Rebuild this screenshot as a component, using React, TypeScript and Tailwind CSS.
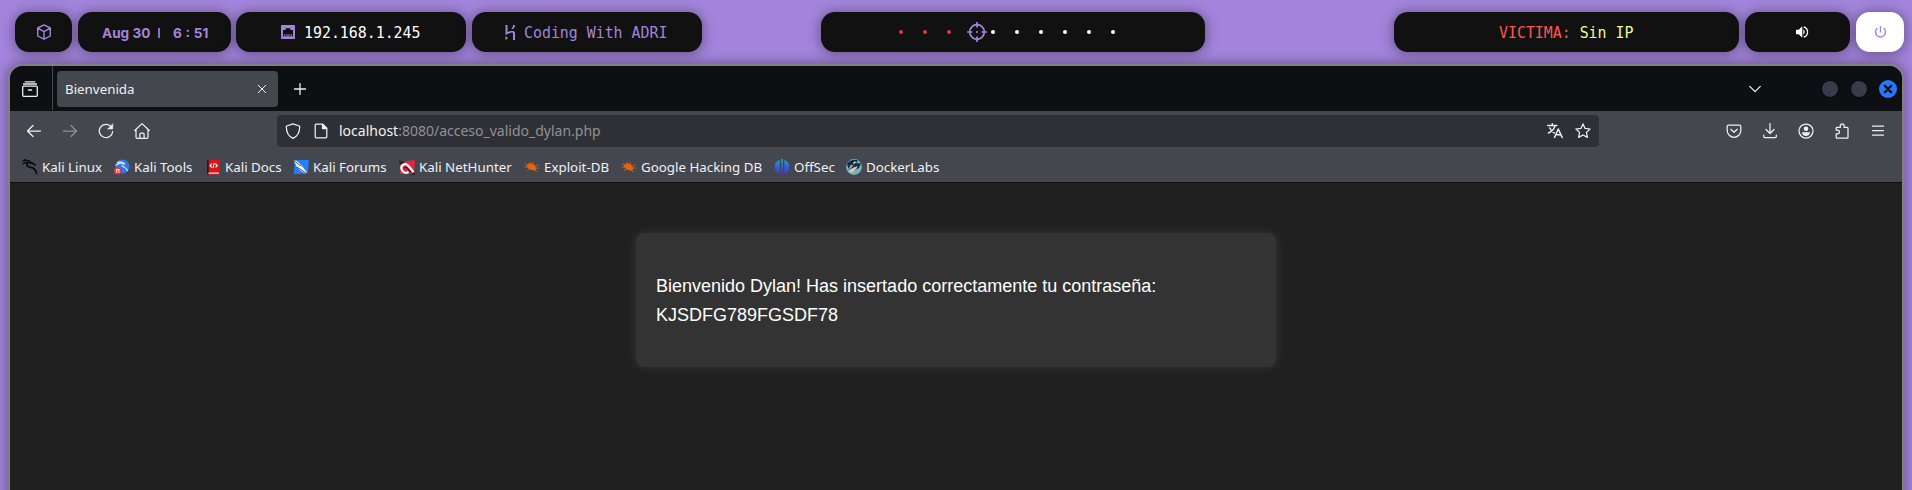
import type { ReactNode } from "react";

const PURPLE = "#a384dc";

function Icon({ children, size = 16, className = "" }: { children: ReactNode; size?: number; className?: string }) {
  return (
    <svg
      width={size}
      height={size}
      viewBox="0 0 16 16"
      fill="none"
      stroke="currentColor"
      strokeWidth="1.25"
      strokeLinecap="round"
      strokeLinejoin="round"
      className={`block shrink-0 ${className}`}
    >
      {children}
    </svg>
  );
}

function Pill({ children, className = "" }: { children?: ReactNode; className?: string }) {
  return (
    <div
      className={`flex h-10 shrink-0 items-center rounded-[14px] shadow-[0_1px_12px_2px_rgba(0,0,0,0.32)] ${className}`}
    >
      {children}
    </div>
  );
}

function Mono({ children, className = "" }: { children: ReactNode; className?: string }) {
  return (
    <span
      className={`mt-0.5 inline-block origin-left scale-x-[0.93] whitespace-pre font-['DejaVu_Sans_Mono','Liberation_Mono',monospace] text-[16px] leading-5 ${className}`}
    >
      {children}
    </span>
  );
}

function Dot({ className }: { className: string }) {
  return <span className={`mr-5 size-1 shrink-0 rounded-full ${className}`} />;
}

function StatusBar() {
  return (
    <header className="flex h-16 items-start pl-[15px] pt-3">
      <Pill className="w-[57px] justify-center bg-[#111111]">
        <svg width="16" height="16" viewBox="0 0 16 16" fill="none" stroke={PURPLE} strokeWidth="1.4" strokeLinejoin="round">
          <path d="M8 .9 14.3 4v8L8 15.2 1.7 12V4L8 .9ZM1.7 4.1 8 7.6l6.3-3.5M8 7.6v7.500" />
        </svg>
      </Pill>
      <Pill className="ml-1.5 w-[153px] whitespace-pre bg-[#111111] pl-6 pt-0.5 font-['Inter',sans-serif] text-[13.6px] font-bold leading-5 text-[#a384dc]">
        <span className="w-[56px] shrink-0">Aug 30</span>
        <span className="mr-[13px] h-2.5 w-0.5 shrink-0 bg-[#8a6fba]" />
        <span className="[word-spacing:0.5px]">6 : 51</span>
      </Pill>
      <Pill className="ml-[5px] w-[230px] bg-[#111111] pl-[45px]">
        <svg width="14" height="14" viewBox="0 0 14 14" className="mr-[9px] shrink-0">
          <rect width="14" height="14" rx="1" fill={PURPLE} />
          <path d="M2 11.5V5h2.5V3.2h5V5H12v6.5h-1.3V9H9.8v2.5H8.4V9h-.9v2.5h-1V9h-.9v2.5H4.2V9h-.9v2.5Z" fill="#111" />
        </svg>
        <Mono className="text-white">192.168.1.245</Mono>
      </Pill>
      <Pill className="ml-1.5 w-[230px] bg-[#111111] pl-[33px]">
        <svg width="11" height="17" viewBox="0 0 11 17" className="mr-2 shrink-0" fill={PURPLE}>
          <path d="M.5 1h2v7C4.6 7 10 5.700 10 9v7H8V9.500c0-2.400-5 .4-7.500 1.500ZM.5 12l2.500 2-2.500 2.200ZM8 1h2c0 1.900-.7 3-1.800 4H6.200C7.300 4 8 2.600 8 1Z" />
        </svg>
        <Mono className="text-[#a384dc]">Coding With ADRI</Mono>
      </Pill>
      <Pill className="ml-[119px] w-[384px] bg-[#111111] pl-[78px]">
        <Dot className="bg-[#e53935]" />
        <Dot className="bg-[#e53935]" />
        <span className="mr-4 size-1 shrink-0 rounded-full bg-[#e53935]" />
        <svg width="20" height="20" viewBox="0 0 20 20" fill="none" stroke={PURPLE} strokeWidth="1.7" className="mr-1 shrink-0">
          <circle cx="10" cy="10" r="7.300" />
          <path d="M10 0v5.500M10 14.500V20M0 10h5.500M14.500 10H20M9 10h2" />
        </svg>
        <Dot className="bg-white" />
        <Dot className="bg-white" />
        <Dot className="bg-white" />
        <Dot className="bg-white" />
        <Dot className="bg-white" />
        <Dot className="bg-white" />
      </Pill>
      <Pill className="ml-[189px] w-[345px] bg-[#111111] pl-[105px]">
        <Mono>
          <span className="text-[#ff5555]">VICTIMA:</span>
          <span className="text-[#f1fa8c]"> Sin IP</span>
        </Mono>
      </Pill>
      <Pill className="ml-1.5 w-[105px] bg-[#111111] pl-[50px]">
        <svg width="14" height="14" viewBox="0 0 14 14" fill="#fff" className="shrink-0">
          <path d="M1 4.700h2.700L7.300 1.200v11.600L3.700 9.300H1Z" />
          <path d="M8.300 4.300c1.800.9 1.800 4.500 0 5.400Z" />
          <path d="M8.800 2c5 1.200 5 8.800 0 10" fill="none" stroke="#fff" strokeWidth="1.300" />
        </svg>
      </Pill>
      <Pill className="ml-1.5 w-12 justify-center bg-white">
        <svg width="13" height="14" viewBox="0 0 13 14" fill="none" stroke={PURPLE} strokeWidth="1.400" className="ml-px">
          <path d="M6.500 1v6.500M3.500 3A5 5 0 1 0 9.500 3" />
        </svg>
      </Pill>
    </header>
  );
}

function TabStrip() {
  return (
    <div className="flex h-[45px] shrink-0 items-center bg-[#0d0f13] text-[#f0f0f3]">
      <div className="flex w-[42px] shrink-0 justify-center">
        <Icon size={16} className="-ml-0.5">
          <path d="M3.200.8h9.600M1.500 3h13M1.700 5.200h12.600a1 1 0 0 1 1 1v8.100a1 1 0 0 1-1 1H1.700a1 1 0 0 1-1-1V6.200a1 1 0 0 1 1-1Z" strokeWidth="1.300" />
          <path d="M6.500 9h3" strokeWidth="1.500" />
        </Icon>
      </div>
      <div className="h-[44px] w-px shrink-0 self-start bg-[#44474e]" />
      <div className="ml-1 flex h-9 w-[221px] shrink-0 items-center rounded-[4px] bg-[#44474e] pl-2 pr-[11px]">
        <span className="flex-1 text-[13.33px] leading-5">Bienvenida</span>
        <Icon size={10}>
          <path d="M2 2l12 12M14 2 2 14" strokeWidth="1.600" />
        </Icon>
      </div>
      <Icon size={12} className="ml-4">
        <path d="M8 .7v14.600M.7 8h14.600" strokeWidth="1.700" />
      </Icon>
      <Icon size={12} className="ml-auto">
        <path d="M1 4.500 8 11.500l7-7" strokeWidth="1.700" />
      </Icon>
      <div className="ml-[61px] size-4 shrink-0 rounded-full bg-[#383c4a] shadow-[0_0_0_1px_#08090b]" />
      <div className="ml-[13px] size-4 shrink-0 rounded-full bg-[#383c4a] shadow-[0_0_0_1px_#08090b]" />
      <div className="ml-3 mr-[5px] flex size-[18px] shrink-0 items-center justify-center rounded-full bg-[#2777ff]">
        <Icon size={10}>
          <path d="M3 3l10 10M13 3 3 13" stroke="#0d0f13" strokeWidth="3.800" />
        </Icon>
      </div>
    </div>
  );
}

function Cell({ children }: { children: ReactNode }) {
  return <div className="flex w-9 shrink-0 items-center justify-center">{children}</div>;
}

function NavBar() {
  return (
    <div className="flex h-9 shrink-0 items-start bg-[#44474e] pt-1 text-[#f0f0f3]">
      <div className="flex h-8 flex-1 items-center pl-1.5">
        <Cell>
          <Icon>
            <path d="M7 2.500 1.500 8 7 13.500M1.500 8h13" />
          </Icon>
        </Cell>
        <Cell>
          <Icon className="text-[#8f9195]">
            <path d="M9 2.500 14.500 8 9 13.500M14.500 8h-13" />
          </Icon>
        </Cell>
        <Cell>
          <Icon>
            <path d="M13.200 3.700A6.700 6.700 0 1 0 14.700 8.500" />
            <path d="M14.800 1v5H9.800Z" fill="currentColor" strokeWidth="0.500" />
          </Icon>
        </Cell>
        <Cell>
          <Icon className="-ml-px">
            <path d="M.8 7.500 7.400 1.100q.6-.5 1.200 0l6.600 6.400M2 6.800v7.400q0 1.100 1.100 1.100h9.800q1.100 0 1.100-1.100V6.800M5.900 15.200v-4q0-1 1-1h2.200q1 0 1 1v4" />
          </Icon>
        </Cell>
        <div className="ml-[117px] flex h-8 w-[1322px] shrink-0 items-center rounded-[4px] bg-[#2f3035] pl-2">
          <Icon>
            <path d="M8 .8 14.300 3q.4.200.4.600C14.700 9.500 12.500 13.500 8 15.400 3.500 13.500 1.300 9.500 1.300 3.600q0-.4.400-.6Z" />
          </Icon>
          <Icon className="ml-3">
            <path d="M3.200 1.200h6.600l4 4v8.600q0 1-1 1H3.200q-1 0-1-1V2.200q0-1 1-1Z" />
            <path d="M9.500 1.500v4h4Z" fill="currentColor" />
          </Icon>
          <p className="ml-[10px] flex-1 text-[14px] leading-5 text-[#8f9195]">
            <span className="text-[#f0f0f3]">localhost</span>:8080/acceso_valido_dylan.php
          </p>
          <Icon>
            <path d="M.8 2.500h9M5.300.8v1.700M8 2.700C7.300 6 4.500 8.800 1.500 10M2.800 5C4 7.500 5.500 9 7.300 10M7.500 14.500 11.300 6l3.900 8.500M8.900 11.800h4.800" strokeWidth="1.500" />
          </Icon>
          <Icon className="ml-3 mr-2">
            <path d="m8 .9 2.100 4.500 5 .6-3.700 3.400 1 5L8 12l-4.400 2.400 1-5L.9 6l5-.6Z" />
          </Icon>
        </div>
      </div>
      <div className="mr-1.5 flex h-8 items-center">
        <Cell>
          <Icon>
            <path d="M2.200 2h11.600q1 0 1 1v4.500a6.800 6.800 0 0 1-13.600 0V3q0-1 1-1ZM4.800 6.300 8 9.300l3.200-3" />
          </Icon>
        </Cell>
        <Cell>
          <Icon>
            <path d="M8 .5v9.700M4 6.500 8 10.500l4-4M1.700 12.200v1.400q0 1 1 1h10.600q1 0 1-1v-1.400" />
          </Icon>
        </Cell>
        <Cell>
          <Icon>
            <circle cx="8" cy="8" r="7" />
            <path d="M4 9.300h8c0 2.200-1.700 3.700-4 3.700S4 11.500 4 9.300Z" fill="currentColor" stroke="none" />
            <circle cx="8" cy="5.800" r="2.300" fill="currentColor" stroke="none" />
          </Icon>
        </Cell>
        <Cell>
          <Icon>
            <path d="M2.200 14.200v-3.400h1.300a1.900 1.900 0 0 0 0-3.800H2.200V5.200q0-.8.800-.8h3.300V2.800a1.900 1.900 0 0 1 3.800 0v1.600h3q.9 0 .9.900v8.900q0 .9-.9.900H3.100q-.9 0-.9-.9Z" />
          </Icon>
        </Cell>
        <Cell>
          <Icon>
            <path d="M2.500 3h11M2.500 7.500h11M2.500 12h11" />
          </Icon>
        </Cell>
      </div>
    </div>
  );
}

function Fav({ children }: { children: ReactNode }) {
  return (
    <svg width="16" height="16" viewBox="0 0 16 16" className="block shrink-0">
      {children}
    </svg>
  );
}

function Bug() {
  return (
    <Fav>
      <path d="M2.500 6.500C5 3 9 4 11.500 7.500c1.500 2 1 3.700-1 3.900C7 11.700 3.500 10 2.500 6.500Z" fill="#e8630f" />
      <path d="M1 4.500l3 1.500M.5 8l3 .2M3 12l2.500-2M6 2.500 7 5M9.500 3l.2 2.500M11 7l3.700-1M11.500 9h4M10 11l3 1.800" stroke="#c65a1a" strokeWidth="1" />
    </Fav>
  );
}

function Bookmark({ icon, label, className }: { icon: ReactNode; label: string; className: string }) {
  return (
    <div className={`flex shrink-0 items-center gap-1 whitespace-nowrap ${className}`}>
      {icon}
      <span>{label}</span>
    </div>
  );
}

function Bookmarks() {
  return (
    <div className="flex h-[35px] shrink-0 items-center bg-[#44474e] pl-3 pt-[5px] text-[13.33px] leading-5 text-[#f0f0f3]">
      <Bookmark
        className="w-[92px]"
        label="Kali Linux"
        icon={
          <Fav>
            <path d="M0 2.300C4 .8 8 1.300 9.500 4.300M.5 5.300C3 3.300 6.500 3 9 4.600M2 .3l4 1.500" stroke="#0b0b0c" strokeWidth="1.100" fill="none" />
            <path d="M5.800 3.500c-2 2.300-.6 4.600 2.700 4.800 3.500.2 5.500 2.700 6.300 7M9 3.800c2 .3 3.300 1 4.500 2.700" stroke="#0b0b0c" strokeWidth="1.700" fill="none" />
          </Fav>
        }
      />
      <Bookmark
        className="w-[91px]"
        label="Kali Tools"
        icon={
          <Fav>
            <circle cx="8.500" cy="7.500" r="7" fill="#2878ef" />
            <path d="M1.500 6.500C5 3.500 9 3.500 11 5.500M3 3.700c3-1.500 6-1 8 1.500M8 5.500c-.5 3 4.500 2 5.500 6.500" stroke="#d8e8ff" strokeWidth="1.200" fill="none" />
            <circle cx="3.700" cy="11.800" r="3.700" fill="#e8343b" />
            <path d="M2 10.500h3.600M2.700 10.500v3.300M4.900 10.500v3.300" stroke="#fff" strokeWidth="0.900" />
          </Fav>
        }
      />
      <Bookmark
        className="w-[88px]"
        label="Kali Docs"
        icon={
          <Fav>
            <path d="M2 .5h12.500v13H2Z" fill="#dc1414" />
            <path d="M2 .5h1.700v15H2Z" fill="#34141a" />
            <path d="M3.500 13.500H14v2H3.500Z" fill="#e4d6d6" />
            <path d="M2 15.300h12.500" stroke="#a81014" />
            <path d="M6.800 4.700 5 6.700l1.800 1.600M10.500 4.700l1.700 2-1.700 1.600M9.300 4 8 9.200" stroke="#fff" strokeWidth="1.100" fill="none" />
          </Fav>
        }
      />
      <Bookmark
        className="w-[106px]"
        label="Kali Forums"
        icon={
          <Fav>
            <path d="M1.500 1 16 1l-1.500 13.500L1 15Z" fill="#2180fa" />
            <path d="M.5 1c4 .5 6 3 8 5.500s4 4.500 6 8.500l-3-1C8 12 4 9.500 3 6Z" fill="#f3f5f7" />
            <path d="M0 .5 4 4l4 3M4 8l6 4 5 3.500" stroke="#20252d" fill="none" strokeWidth="0.800" />
          </Fav>
        }
      />
      <Bookmark
        className="w-[125px]"
        label="Kali NetHunter"
        icon={
          <Fav>
            <path d="M1.500 3 16 1l-1 13.500L1 15Z" fill="#e9253c" />
            <path d="M0 1.500 6 3 1 6Z" fill="#222" />
            <path d="M14.500 13 9 6.500C6 3.500 1.500 6.500 2.500 10c1 3.700 4.500 4.500 7 3" stroke="#fff" strokeWidth="2.200" fill="none" />
            <path d="M5 9.500q1-2 3-.8l4 4.500" stroke="#252326" strokeWidth="1.300" fill="none" />
            <path d="M10 15.500 16 14v2Z" fill="#222" />
          </Fav>
        }
      />
      <Bookmark className="w-[97px]" label="Exploit-DB" icon={<Bug />} />
      <Bookmark className="w-[153px]" label="Google Hacking DB" icon={<Bug />} />
      <Bookmark
        className="w-[72px]"
        label="OffSec"
        icon={
          <Fav>
            <defs>
              <linearGradient id="offsec" x1="0" y1="0" x2="0" y2="1">
                <stop offset="0" stopColor="#18a8c8" />
                <stop offset="0.500" stopColor="#3060d8" />
                <stop offset="1" stopColor="#6428c0" />
              </linearGradient>
            </defs>
            <path d="M5.700.8v14.400C-.8 13-1.200 3 5.700.8ZM10.300.8v14.400C16.800 13 17.200 3 10.300.8ZM7.200 0h1.600v16H7.200Z" fill="url(#offsec)" />
          </Fav>
        }
      />
      <Bookmark
        className="w-[100px]"
        label="DockerLabs"
        icon={
          <Fav>
            <circle cx="8" cy="8" r="7.900" fill="#78b4c0" />
            <path d="M1 5C4 1 8 0 12 1.500L9 5.500 4.500 6l-2 4Z" fill="#142b42" />
            <path d="M6.500 3.500 15 4.500l-2 4.500-7 3.500L3 11l4-4Z" fill="#173049" />
            <path d="M3 13c1-3.500 4-4 8.500-6l-1 2.500L6 13.500Z" fill="#f2c6a4" />
            <path d="M8 2.500 10.500 3 7 5.500Z" fill="#eef4f5" />
          </Fav>
        }
      />
    </div>
  );
}

export default function App() {
  return (
    <div className="h-[490px] w-[1912px] overflow-hidden bg-[#a384dc]">
      <StatusBar />
      <main className="relative ml-2 h-[440px] w-[1896px] rounded-t-[15px] shadow-[0_0_12px_2px_rgba(0,0,0,0.32)]">
        <div className="flex h-full flex-col overflow-hidden rounded-t-[15px] border-2 border-b-0 border-[#80807e] bg-[#202020] font-['Noto_Sans',sans-serif]">
          <TabStrip />
          <NavBar />
          <Bookmarks />
          <div className="flex-1 border-t border-[#0d0f13] pt-[50px]">
            <section className="mx-auto w-[640px] rounded-lg bg-[#333333] px-5 pb-[19px] pt-[21px] shadow-[0_0_10px_rgba(255,255,255,0.1)]">
              <p className="my-[18px] font-['Liberation_Sans',Arial,sans-serif] text-[18px] leading-[28.8px] text-white">
                Bienvenido Dylan! Has insertado correctamente tu contraseña:
                <br />
                KJSDFG789FGSDF78
              </p>
            </section>
          </div>
        </div>
      </main>
    </div>
  );
}
